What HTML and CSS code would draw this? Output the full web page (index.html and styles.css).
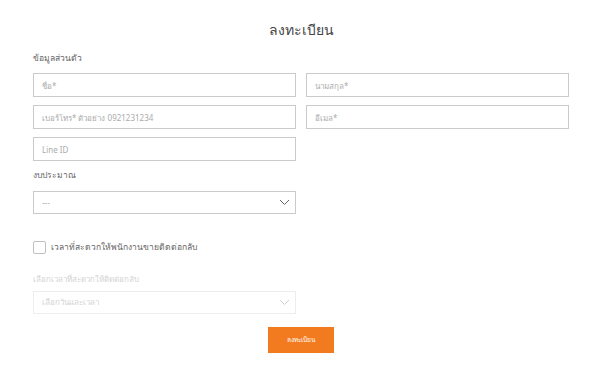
FILE: index.html
```html
<!DOCTYPE html>
<html lang="th">
<head>
  <meta charset="UTF-8">
  <meta name="viewport" content="width=device-width, initial-scale=1.0">
  <title>ลงทะเบียน</title>
  <link rel="stylesheet" href="styles.css">
</head>
<body>
  <div class="page">
    <h1 class="title">ลงทะเบียน</h1>
    <form class="register">
      <p class="section-label">ข้อมูลส่วนตัว</p>
      <div class="fields">
        <input type="text" class="input-field" placeholder="ชื่อ*">
        <input type="text" class="input-field" placeholder="นามสกุล*">
        <input type="tel" class="input-field" placeholder="เบอร์โทร* ตัวอย่าง 0921231234">
        <input type="email" class="input-field" placeholder="อีเมล*">
        <input type="text" class="input-field" placeholder="Line ID">
      </div>

      <p class="section-label budget-label">งบประมาณ</p>
      <div class="select-box">
        <span>---</span>
        <svg width="11" height="7" viewBox="0 0 11 7"><path d="M1 1l4.5 4.5L10 1" fill="none" stroke="#666" stroke-width="1"/></svg>
      </div>

      <label class="check-row">
        <input type="checkbox" class="check">
        <span>เวลาที่สะดวกให้พนักงานขายติดต่อกลับ</span>
      </label>

      <p class="section-label muted">เลือกเวลาที่สะดวกให้ติดต่อกลับ</p>
      <div class="select-box disabled">
        <span>เลือกวันและเวลา</span>
        <svg width="11" height="7" viewBox="0 0 11 7"><path d="M1 1l4.5 4.5L10 1" fill="none" stroke="#d0d0d0" stroke-width="1"/></svg>
      </div>

      <div class="actions">
        <button type="submit" class="submit">ลงทะเบียน</button>
      </div>
    </form>
  </div>
</body>
</html>
```

FILE: styles.css
```css
body {
  margin: 0;
  background-color: #ffffff;
  font-family: 'Noto Sans', 'DejaVu Sans', sans-serif;
  color: #666;
}
.page {
  width: 536px;
  padding: 20px 31px 0 33px;
}
.title {
  margin: 0 0 12px;
  font-size: 14px;
  line-height: 20px;
  font-weight: 400;
  text-align: center;
  color: #444;
}
.section-label {
  margin: 0 0 9px;
  font-size: 8.5px;
  line-height: 12px;
  color: #666;
}
.fields {
  display: grid;
  grid-template-columns: 1fr 1fr;
  column-gap: 10px;
  row-gap: 8px;
}
.input-field {
  box-sizing: border-box;
  height: 24px;
  width: 100%;
  margin: 0;
  padding: 0 8px;
  border: 1px solid #cacaca;
  border-radius: 0;
  font-family: inherit;
  font-size: 8px;
  color: #666;
}
.input-field::placeholder {
  color: #ababab;
}
.budget-label {
  margin-top: 8px;
  margin-bottom: 10px;
}
.select-box {
  box-sizing: border-box;
  width: 263px;
  height: 23px;
  padding: 0 5px 0 8px;
  display: flex;
  align-items: center;
  justify-content: space-between;
  border: 1px solid #cacaca;
  font-size: 8px;
  color: #ababab;
}
.select-box.disabled {
  border-color: #ededed;
  color: #d3d3d3;
}
.check-row {
  margin-top: 26px;
  display: flex;
  align-items: center;
  gap: 5px;
  font-size: 8.5px;
  color: #666;
}
.check {
  appearance: none;
  box-sizing: border-box;
  width: 13px;
  height: 13px;
  margin: 0;
  border: 1px solid #c0c0c0;
  border-radius: 2px;
  background: #fff;
}
.muted {
  margin-top: 19px;
  margin-bottom: 6px;
  font-size: 8px;
  color: #d3d3d3;
}
.actions {
  margin-top: 13px;
  display: flex;
  justify-content: center;
}
.submit {
  width: 66px;
  height: 26px;
  padding: 0;
  border: none;
  background-color: #f27b20;
  color: #ffffff;
  font-family: inherit;
  font-size: 6.5px;
  cursor: pointer;
}
```
